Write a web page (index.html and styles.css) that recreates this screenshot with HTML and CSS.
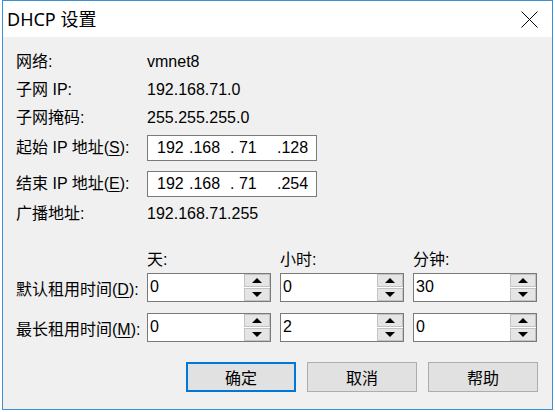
FILE: index.html
```html
<!DOCTYPE html>
<html lang="zh-CN">
<head>
<meta charset="utf-8">
<title>DHCP 设置</title>
<link rel="stylesheet" href="styles.css">
</head>
<body>
<div class="window">
  <div class="titlebar">
    <span class="title">DHCP 设置</span>
    <span class="close">
      <svg width="17" height="17" viewBox="0 0 17 17"><path d="M0.5 0.5 L16.5 16.5 M16.5 0.5 L0.5 16.5" stroke="#000" stroke-width="1" fill="none"/></svg>
    </span>
  </div>
  <div class="content">
    <div class="row r1"><span>网络:</span><span>vmnet8</span></div>
    <div class="row"><span>子网 IP:</span><span>192.168.71.0</span></div>
    <div class="row"><span>子网掩码:</span><span>255.255.255.0</span></div>
    <div class="row r4"><span>起始 IP 地址(<u>S</u>):</span>
      <div class="ipbox"><span class="o1">192</span><span class="o2">.168</span><span class="o3">. 71</span><span class="o4">.128</span></div>
    </div>
    <div class="row r5"><span>结束 IP 地址(<u>E</u>):</span>
      <div class="ipbox"><span class="o1">192</span><span class="o2">.168</span><span class="o3">. 71</span><span class="o4">.254</span></div>
    </div>
    <div class="row r6"><span>广播地址:</span><span>192.168.71.255</span></div>

    <div class="grid3 hdr"><span></span><span>天:</span><span>小时:</span><span>分钟:</span></div>
    <div class="grid3 spinrow s1">
      <span class="lbl">默认租用时间(<u>D</u>):</span>
      <div class="spin"><div class="field">0</div><div class="btns"><div class="btn"><i class="up"></i></div><div class="btn"><i class="down"></i></div></div></div>
      <div class="spin"><div class="field">0</div><div class="btns"><div class="btn"><i class="up"></i></div><div class="btn"><i class="down"></i></div></div></div>
      <div class="spin"><div class="field">30</div><div class="btns"><div class="btn"><i class="up"></i></div><div class="btn"><i class="down"></i></div></div></div>
    </div>
    <div class="grid3 spinrow s2">
      <span class="lbl">最长租用时间(<u>M</u>):</span>
      <div class="spin"><div class="field">0</div><div class="btns"><div class="btn"><i class="up"></i></div><div class="btn"><i class="down"></i></div></div></div>
      <div class="spin"><div class="field">2</div><div class="btns"><div class="btn"><i class="up"></i></div><div class="btn"><i class="down"></i></div></div></div>
      <div class="spin"><div class="field">0</div><div class="btns"><div class="btn"><i class="up"></i></div><div class="btn"><i class="down"></i></div></div></div>
    </div>

    <div class="buttons">
      <button class="pbtn default">确定</button>
      <button class="pbtn">取消</button>
      <button class="pbtn">帮助</button>
    </div>
  </div>
</div>
</body>
</html>
```
FILE: styles.css
```css
html, body {
  margin: 0;
  padding: 0;
  background: #ffffff;
}
body {
  width: 555px;
  height: 412px;
  overflow: hidden;
  font-family: "Liberation Sans", "Noto Sans CJK SC", sans-serif;
  font-size: 16px;
  color: #000;
}
.window {
  margin-left: 2px;
  width: 549px;
  height: 408px;
  border: 1px solid #3d8fd1;
  background: #f0f0f0;
  display: flex;
  flex-direction: column;
}
.titlebar {
  height: 36px;
  background: #ffffff;
  display: flex;
  align-items: center;
  justify-content: space-between;
  padding-left: 4px;
  flex: none;
}
.title {
  font-family: "Noto Sans", "Noto Sans CJK SC", sans-serif;
  font-size: 18px;
  line-height: 20px;
}
.close {
  width: 17px;
  height: 17px;
  margin-right: 14px;
  display: flex;
}
.content {
  padding: 11px 13px 0 13px;
  display: flex;
  flex-direction: column;
}
.row {
  display: grid;
  grid-template-columns: 131px 1fr;
  height: 28px;
  align-items: center;
  line-height: 18px;
}
.r4 { margin-top: 2px; }
.r5 { margin-top: 8px; }
.r6 { margin-top: 2px; }
.ipbox {
  width: 170px;
  height: 26px;
  box-sizing: border-box;
  border: 1px solid #7a7a7a;
  background: #fff;
  display: flex;
  align-items: center;
  padding-left: 9px;
  white-space: pre;
}
.o1 { width: 32px; }
.o2 { width: 41px; }
.o3 { width: 47px; }
.grid3 {
  display: grid;
  grid-template-columns: 122px 124px 124px 124px;
  column-gap: 9px;
  align-items: center;
}
.lbl { white-space: nowrap; }
.hdr {
  margin-top: 16px;
  height: 28px;
}
.spinrow { height: 29px; }
.s1 { margin-top: 1px; }
.s2 { margin-top: 11px; }
.spin {
  display: flex;
  height: 29px;
}
.field {
  flex: 1;
  border: 1px solid #7a7a7a;
  border-right: none;
  background: #fff;
  padding-left: 2px;
  line-height: 25px;
}
.btns {
  width: 26px;
  display: flex;
  flex-direction: column;
  background: #fff;
  border-top: 1px solid #7a7a7a;
  border-bottom: 1px solid #7a7a7a;
  border-right: 1px solid #7a7a7a;
}
.btn {
  flex: 1;
  background: #e5e5e5;
  border: 1px solid #c3c3c3;
  display: flex;
  align-items: center;
  justify-content: center;
}
.btn + .btn { margin-top: 1px; }
.up {
  width: 0;
  height: 0;
  border-left: 5px solid transparent;
  border-right: 5px solid transparent;
  border-bottom: 5px solid #000;
}
.down {
  width: 0;
  height: 0;
  border-left: 5px solid transparent;
  border-right: 5px solid transparent;
  border-top: 5px solid #000;
}
.buttons {
  margin-top: 20px;
  display: flex;
  justify-content: flex-end;
  gap: 11px;
  padding-right: 1px;
}
.pbtn {
  width: 110px;
  height: 30px;
  box-sizing: border-box;
  border: 1px solid #adadad;
  background: #e1e1e1;
  font-family: "Noto Sans CJK SC", sans-serif;
  font-size: 16px;
  color: #000;
  padding: 0;
}
.pbtn.default {
  border: 2px solid #0078d7;
}
u { text-underline-offset: 2px; }
```
